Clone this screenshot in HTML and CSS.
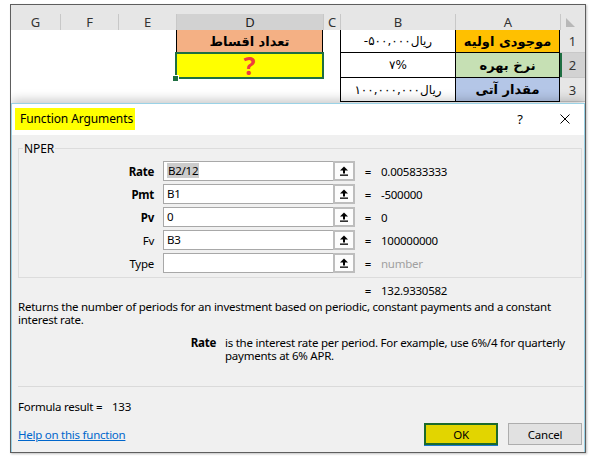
FILE: index.html
```html
<!DOCTYPE html>
<html>
<head>
<meta charset="utf-8">
<link rel="stylesheet" href="styles.css">
</head>
<body>
<div class="frame">
  <div class="strip"></div>
  <div class="sheet">
    <div class="ch">G</div>
    <div class="ch">F</div>
    <div class="ch">E</div>
    <div class="ch ch-sel">D</div>
    <div class="ch">C</div>
    <div class="ch">B</div>
    <div class="ch">A</div>
    <div class="ch corner"><span class="tri"></span></div>

    <div class="c"></div>
    <div class="c"></div>
    <div class="c"></div>
    <div class="c fa d1">تعداد اقساط</div>
    <div class="c"></div>
    <div class="c cb"><span class="num">-۵۰۰,۰۰۰</span><span>ریال</span></div>
    <div class="c ca a1">موجودی اولیه</div>
    <div class="rh">1</div>

    <div class="c"></div>
    <div class="c"></div>
    <div class="c"></div>
    <div class="c d2">?</div>
    <div class="c"></div>
    <div class="c cb"><span class="num">۷%</span></div>
    <div class="c ca a2">نرخ بهره</div>
    <div class="rh rh-sel">2</div>

    <div class="c"></div>
    <div class="c"></div>
    <div class="c"></div>
    <div class="c"></div>
    <div class="c"></div>
    <div class="c cb"><span class="num">۱۰۰,۰۰۰,۰۰۰</span><span>ریال</span></div>
    <div class="c ca a3">مقدار آتی</div>
    <div class="rh">3</div>
  </div>

  <div class="dialog">
    <div class="titlebar">
      <div class="title">Function Arguments</div>
      <div class="controls">
        <span class="help">?</span>
        <svg class="close" width="10" height="10" viewBox="0 0 10 10"><path d="M0.5 0.5 L9.5 9.5 M9.5 0.5 L0.5 9.5" stroke="#000" stroke-width="1"/></svg>
      </div>
    </div>
    <div class="body">
      <div class="group">
        <div class="legend">NPER</div>
        <div class="args">
          <div class="lbl b">Rate</div>
          <div class="inp"><span class="selt">B2/12</span></div>
          <div class="ref"><svg width="10" height="10" viewBox="0 0 10 10"><path d="M5 0.5 L9 4.5 L6 4.5 L6 7.5 L4 7.5 L4 4.5 L1 4.5 Z" fill="#000"/><rect x="1" y="8.5" width="8" height="1.3" fill="#000"/></svg></div>
          <div class="eq">=</div>
          <div class="val">0.005833333</div>

          <div class="lbl b">Pmt</div>
          <div class="inp">B1</div>
          <div class="ref"><svg width="10" height="10" viewBox="0 0 10 10"><path d="M5 0.5 L9 4.5 L6 4.5 L6 7.5 L4 7.5 L4 4.5 L1 4.5 Z" fill="#000"/><rect x="1" y="8.5" width="8" height="1.3" fill="#000"/></svg></div>
          <div class="eq">=</div>
          <div class="val">-500000</div>

          <div class="lbl b">Pv</div>
          <div class="inp">0</div>
          <div class="ref"><svg width="10" height="10" viewBox="0 0 10 10"><path d="M5 0.5 L9 4.5 L6 4.5 L6 7.5 L4 7.5 L4 4.5 L1 4.5 Z" fill="#000"/><rect x="1" y="8.5" width="8" height="1.3" fill="#000"/></svg></div>
          <div class="eq">=</div>
          <div class="val">0</div>

          <div class="lbl">Fv</div>
          <div class="inp">B3</div>
          <div class="ref"><svg width="10" height="10" viewBox="0 0 10 10"><path d="M5 0.5 L9 4.5 L6 4.5 L6 7.5 L4 7.5 L4 4.5 L1 4.5 Z" fill="#000"/><rect x="1" y="8.5" width="8" height="1.3" fill="#000"/></svg></div>
          <div class="eq">=</div>
          <div class="val">100000000</div>

          <div class="lbl">Type</div>
          <div class="inp"></div>
          <div class="ref"><svg width="10" height="10" viewBox="0 0 10 10"><path d="M5 0.5 L9 4.5 L6 4.5 L6 7.5 L4 7.5 L4 4.5 L1 4.5 Z" fill="#000"/><rect x="1" y="8.5" width="8" height="1.3" fill="#000"/></svg></div>
          <div class="eq">=</div>
          <div class="val muted">number</div>
        </div>
      </div>

      <div class="result"><span class="eq">=</span><span>132.9330582</span></div>

      <div class="desc">Returns the number of periods for an investment based on periodic, constant payments and a constant<br>interest rate.</div>

      <div class="arghelp">
        <div class="ahl">Rate</div>
        <div>is the interest rate per period. For example, use 6%/4 for quarterly<br>payments at 6% APR.</div>
      </div>

      <div class="sep"></div>

      <div class="formula"><span class="fl">Formula result =</span><span>133</span></div>

      <div class="footer">
        <a class="link" href="#">Help on this function</a>
        <div class="buttons">
          <div class="btn ok">OK</div>
          <div class="btn">Cancel</div>
        </div>
      </div>
    </div>
  </div>
</div>
</body>
</html>
```

FILE: styles.css
```css
html, body {
  margin: 0;
  padding: 0;
}
body {
  width: 593px;
  height: 459px;
  background: #ffffff;
  font-family: "Noto Sans", "Open Sans", sans-serif;
  overflow: hidden;
}
.frame {
  margin: 4px 0 0 10px;
  width: 576px;
  height: 449px;
  box-sizing: border-box;
  border: 1px solid #5e5e5e;
  overflow: hidden;
  box-shadow: 1px 1px 2px rgba(0,0,0,0.25);
}
.strip {
  height: 9px;
  background: #e6e6e6;
}
.sheet {
  display: grid;
  grid-template-columns: 49px 58px 58px 147px 17px 115px 105px 25px;
  grid-template-rows: 16px 23px 25px 24px;
}
.ch {
  background: #e6e6e6;
  color: #333;
  font-size: 13px;
  line-height: 17px;
  text-align: center;
  border-left: 1px solid #c8c8c8;
  box-sizing: border-box;
}
.ch:first-child {
  border-left: 0;
}
.ch-sel {
  background: #d2d2d2;
  color: #222;
}
.corner {
  position: relative;
}
.tri {
  position: absolute;
  left: 5px;
  top: 4px;
  width: 9px;
  height: 9px;
  background: #b8b8b8;
  clip-path: polygon(0 0, 0 100%, 100% 100%);
}
.c {
  box-sizing: border-box;
  background: #fff;
  display: flex;
  align-items: center;
  justify-content: center;
  font-family: "DejaVu Sans", sans-serif;
  font-size: 12px;
  color: #000;
}
.fa {
  direction: rtl;
}
.d1 {
  background: #f4b084;
  border-left: 1px solid #000;
  border-right: 1px solid #000;
  font-weight: bold;
  font-size: 13px;
}
.d2 {
  background: #ffff00;
  outline: 2px solid #1e6f42;
  outline-offset: -1px;
  position: relative;
  color: #ef3d3d;
  font-family: "Noto Sans", sans-serif;
  font-weight: bold;
  font-size: 25px;
  line-height: 25px;
}
.d2::after {
  content: "";
  position: absolute;
  left: -3px;
  bottom: -3px;
  width: 5px;
  height: 5px;
  background: #1e6f42;
  border: 1px solid #fff;
  border-width: 1px 1px 0 0;
}
.cb {
  border-left: 1px solid #000;
  border-bottom: 1px solid #000;
  direction: ltr;
}
.ca {
  border-left: 1px solid #000;
  border-right: 1px solid #000;
  border-bottom: 1px solid #000;
  direction: rtl;
  font-weight: bold;
  font-size: 13px;
}
.a1 { background: #ffc000; }
.a2 { background: #c6e0b4; }
.a3 { background: #b4c6e7; }
.num {
  direction: ltr;
  unicode-bidi: isolate;
}
.rh {
  background: #e6e6e6;
  color: #333;
  font-size: 13px;
  display: flex;
  align-items: center;
  justify-content: center;
  border-bottom: 1px solid #c8c8c8;
  box-sizing: border-box;
}
.rh-sel {
  background: #d2d2d2;
  box-shadow: inset 2px 0 0 #1e6f42;
}

.dialog {
  margin-top: 1px;
  height: 349px;
  box-sizing: border-box;
  border: 1px solid #9ad2e6;
  border-bottom: 0;
  background: #f0f0f0;
  box-shadow: 0 -3px 10px rgba(0,0,0,0.22);
  position: relative;
  font-size: 11.5px;
  letter-spacing: -0.25px;
  color: #000;
}
.titlebar {
  height: 31px;
  background: #fff;
  display: flex;
  align-items: flex-start;
  padding: 4px 0 0 3px;
  box-sizing: border-box;
}
.title {
  background: #ffff00;
  width: 120px;
  height: 22px;
  line-height: 22px;
  padding-left: 5px;
  box-sizing: border-box;
  font-size: 12px;
  letter-spacing: -0.1px;
}
.controls {
  margin-left: auto;
  display: flex;
  align-items: center;
  height: 22px;
  padding-right: 14px;
}
.help {
  font-size: 13px;
  width: 14px;
  text-align: center;
}
.close {
  margin-left: 33px;
  display: block;
}
.body {
  padding: 0 2px 0 6px;
}
.group {
  margin-top: 13px;
  height: 130px;
  box-sizing: border-box;
  border: 1px solid #dcdcdc;
}
.legend {
  width: fit-content;
  margin: -8px 0 0 4px;
  padding: 0 1px;
  background: #f0f0f0;
  line-height: 16px;
  font-size: 12px;
  letter-spacing: -0.1px;
}
.args {
  margin-top: 4px;
  display: grid;
  grid-template-columns: 144px 170px 22px 26px auto;
  grid-auto-rows: 20px;
  row-gap: 3px;
  align-items: center;
}
.lbl {
  text-align: right;
  padding-right: 9px;
}
.b {
  font-weight: bold;
}
.inp {
  height: 20px;
  box-sizing: border-box;
  background: #fff;
  border: 1px solid #a8a8a8;
  border-right: 0;
  padding-left: 3px;
  line-height: 18px;
}
.selt {
  background: #cccccc;
  padding: 0 1px;
}
.ref {
  height: 20px;
  box-sizing: border-box;
  border: 2px solid #bdbdbd;
  background: #fcfcfc;
  display: flex;
  align-items: center;
  justify-content: center;
}
.ref svg {
  display: block;
}
.eq {
  text-align: center;
}
.muted {
  color: #a0a0a0;
}
.result {
  margin-top: 6px;
  margin-left: 337px;
  line-height: 13px;
  display: flex;
}
.result .eq {
  width: 26px;
  display: inline-block;
}
.desc {
  margin-top: 3px;
  line-height: 13px;
  white-space: nowrap;
}
.arghelp {
  margin-top: 10px;
  display: grid;
  grid-template-columns: 198px auto;
  column-gap: 9px;
  line-height: 13px;
  white-space: nowrap;
}
.ahl {
  text-align: right;
  font-weight: bold;
}
.sep {
  margin-top: 24px;
  height: 1px;
  background: #dadada;
  margin-right: -1px;
}
.formula {
  margin-top: 13px;
  line-height: 13px;
}
.fl {
  display: inline-block;
  width: 94px;
}
.footer {
  margin-top: 10px;
  height: 22px;
  display: flex;
  align-items: center;
}
.link {
  color: #0066cc;
  text-decoration: underline;
}
.buttons {
  margin-left: auto;
  display: flex;
  gap: 10px;
}
.btn {
  width: 74px;
  height: 22px;
  box-sizing: border-box;
  background: #e1e1e1;
  border: 1px solid #adadad;
  display: flex;
  align-items: center;
  justify-content: center;
}
.ok {
  background: #e2d500;
  border: 2px solid #1c6a2c;
  box-shadow: 0 1px 0 #1a78d0;
}
```
